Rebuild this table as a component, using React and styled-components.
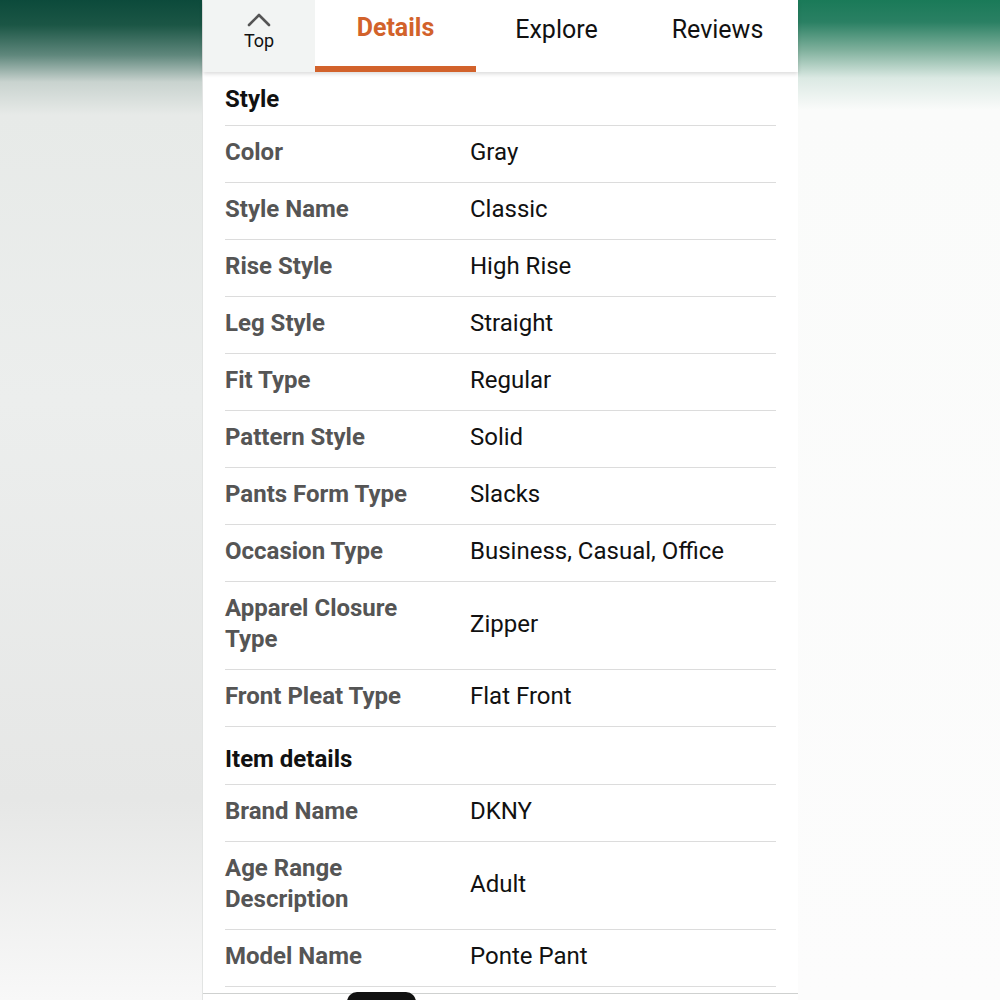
import styled, { createGlobalStyle } from "styled-components";

const GlobalStyle = createGlobalStyle`
  html, body {
    margin: 0;
    padding: 0;
    background: #f1f2f1;
  }
  body {
    font-family: "Roboto", "Liberation Sans", sans-serif;
  }
`;

const sections = [
  {
    title: "Style",
    rows: [
      ["Color", "Gray"],
      ["Style Name", "Classic"],
      ["Rise Style", "High Rise"],
      ["Leg Style", "Straight"],
      ["Fit Type", "Regular"],
      ["Pattern Style", "Solid"],
      ["Pants Form Type", "Slacks"],
      ["Occasion Type", "Business, Casual, Office"],
      ["Apparel Closure Type", "Zipper"],
      ["Front Pleat Type", "Flat Front"],
    ],
  },
  {
    title: "Item details",
    rows: [
      ["Brand Name", "DKNY"],
      ["Age Range Description", "Adult"],
      ["Model Name", "Ponte Pant"],
    ],
  },
];

export default function App() {
  return (
    <>
      <GlobalStyle />
      <Page>
        <Backdrop side="left" />
        <Screen>
          <TabBar>
            <TopTab>
              <svg width="26" height="15" viewBox="0 0 26 15">
                <path
                  d="M3 13 L13 3 L23 13"
                  fill="none"
                  stroke="#555"
                  strokeWidth="2.6"
                  strokeLinecap="round"
                  strokeLinejoin="round"
                />
              </svg>
              <span>Top</span>
            </TopTab>
            <Tab active>Details</Tab>
            <Tab>Explore</Tab>
            <Tab>Reviews</Tab>
          </TabBar>

          <Content>
            {sections.map((section, i) => (
              <div key={section.title}>
                <SectionTitle first={i === 0}>{section.title}</SectionTitle>
                {section.rows.map(([label, value]) => (
                  <Row key={label}>
                    <Label>{label}</Label>
                    <Value>{value}</Value>
                  </Row>
                ))}
              </div>
            ))}
          </Content>

          <BottomEdge>
            <HomePill />
          </BottomEdge>
        </Screen>
        <Backdrop side="right" />
      </Page>
    </>
  );
}

const Page = styled.div`
  display: flex;
  width: 1000px;
  height: 1000px;
  overflow: hidden;
`;

const Backdrop = styled.div`
  flex: 1;
  background: ${(p) =>
    p.side === "left"
      ? "linear-gradient(to bottom, #0c4a3b 0px, #1b5645 25px, #5f877c 55px, #c9d3cf 82px, #e7eae8 115px, #eceeed 400px, #e6e7e6 800px, #f8f8f8 1000px)"
      : "linear-gradient(to bottom, #1a7a58 0px, #2a8063 22px, #7fb09c 50px, #dbe9e3 78px, #fafbfa 110px, #fcfcfc 1000px)"};
`;

const Screen = styled.div`
  width: 595px;
  flex-shrink: 0;
  display: flex;
  flex-direction: column;
  background: #fff;
  border-left: 1px solid #e2e4e3;
`;

const TabBar = styled.div`
  display: flex;
  height: 72px;
  flex-shrink: 0;
  box-shadow: 0 2px 4px rgba(0, 0, 0, 0.14);
  position: relative;
  z-index: 1;
  background: #fff;
`;

const TopTab = styled.div`
  width: 112px;
  display: flex;
  flex-direction: column;
  align-items: center;
  padding-top: 12px;
  background: #f2f4f3;
  box-sizing: border-box;

  span {
    font-size: 18px;
    color: #111;
    line-height: 22px;
    margin-top: 3px;
  }
`;

const Tab = styled.div`
  width: 161px;
  box-sizing: border-box;
  text-align: center;
  padding-top: ${(p) => (p.active ? "13px" : "15px")};
  font-size: 25px;
  line-height: 30px;
  font-weight: ${(p) => (p.active ? 700 : 400)};
  color: ${(p) => (p.active ? "#d2622b" : "#111")};
  border-bottom: 6px solid ${(p) => (p.active ? "#d2622b" : "transparent")};
`;

const Content = styled.div`
  flex: 1;
  padding: 0 22px;
  overflow: hidden;
`;

const SectionTitle = styled.div`
  font-size: 24px;
  font-weight: 700;
  color: #111;
  line-height: 31px;
  padding: ${(p) => (p.first ? "12px 0 10px" : "17px 0 9px")};
  border-bottom: 1px solid #dcdcdc;
`;

const Row = styled.div`
  display: grid;
  grid-template-columns: 245px 1fr;
  align-items: center;
  padding: 11px 0 14px;
  border-bottom: 1px solid #dcdcdc;
  font-size: 24px;
  line-height: 31px;
`;

const Label = styled.div`
  font-weight: 700;
  color: #555;
  padding-right: 20px;
`;

const Value = styled.div`
  color: #111;
`;

const BottomEdge = styled.div`
  height: 6px;
  flex-shrink: 0;
  border-top: 1px solid #cfd1d0;
  position: relative;
  background: #fff;
`;

const HomePill = styled.div`
  position: absolute;
  left: 144px;
  top: -2px;
  width: 69px;
  height: 12px;
  background: #111;
  border-radius: 10px 10px 0 0;
`;
